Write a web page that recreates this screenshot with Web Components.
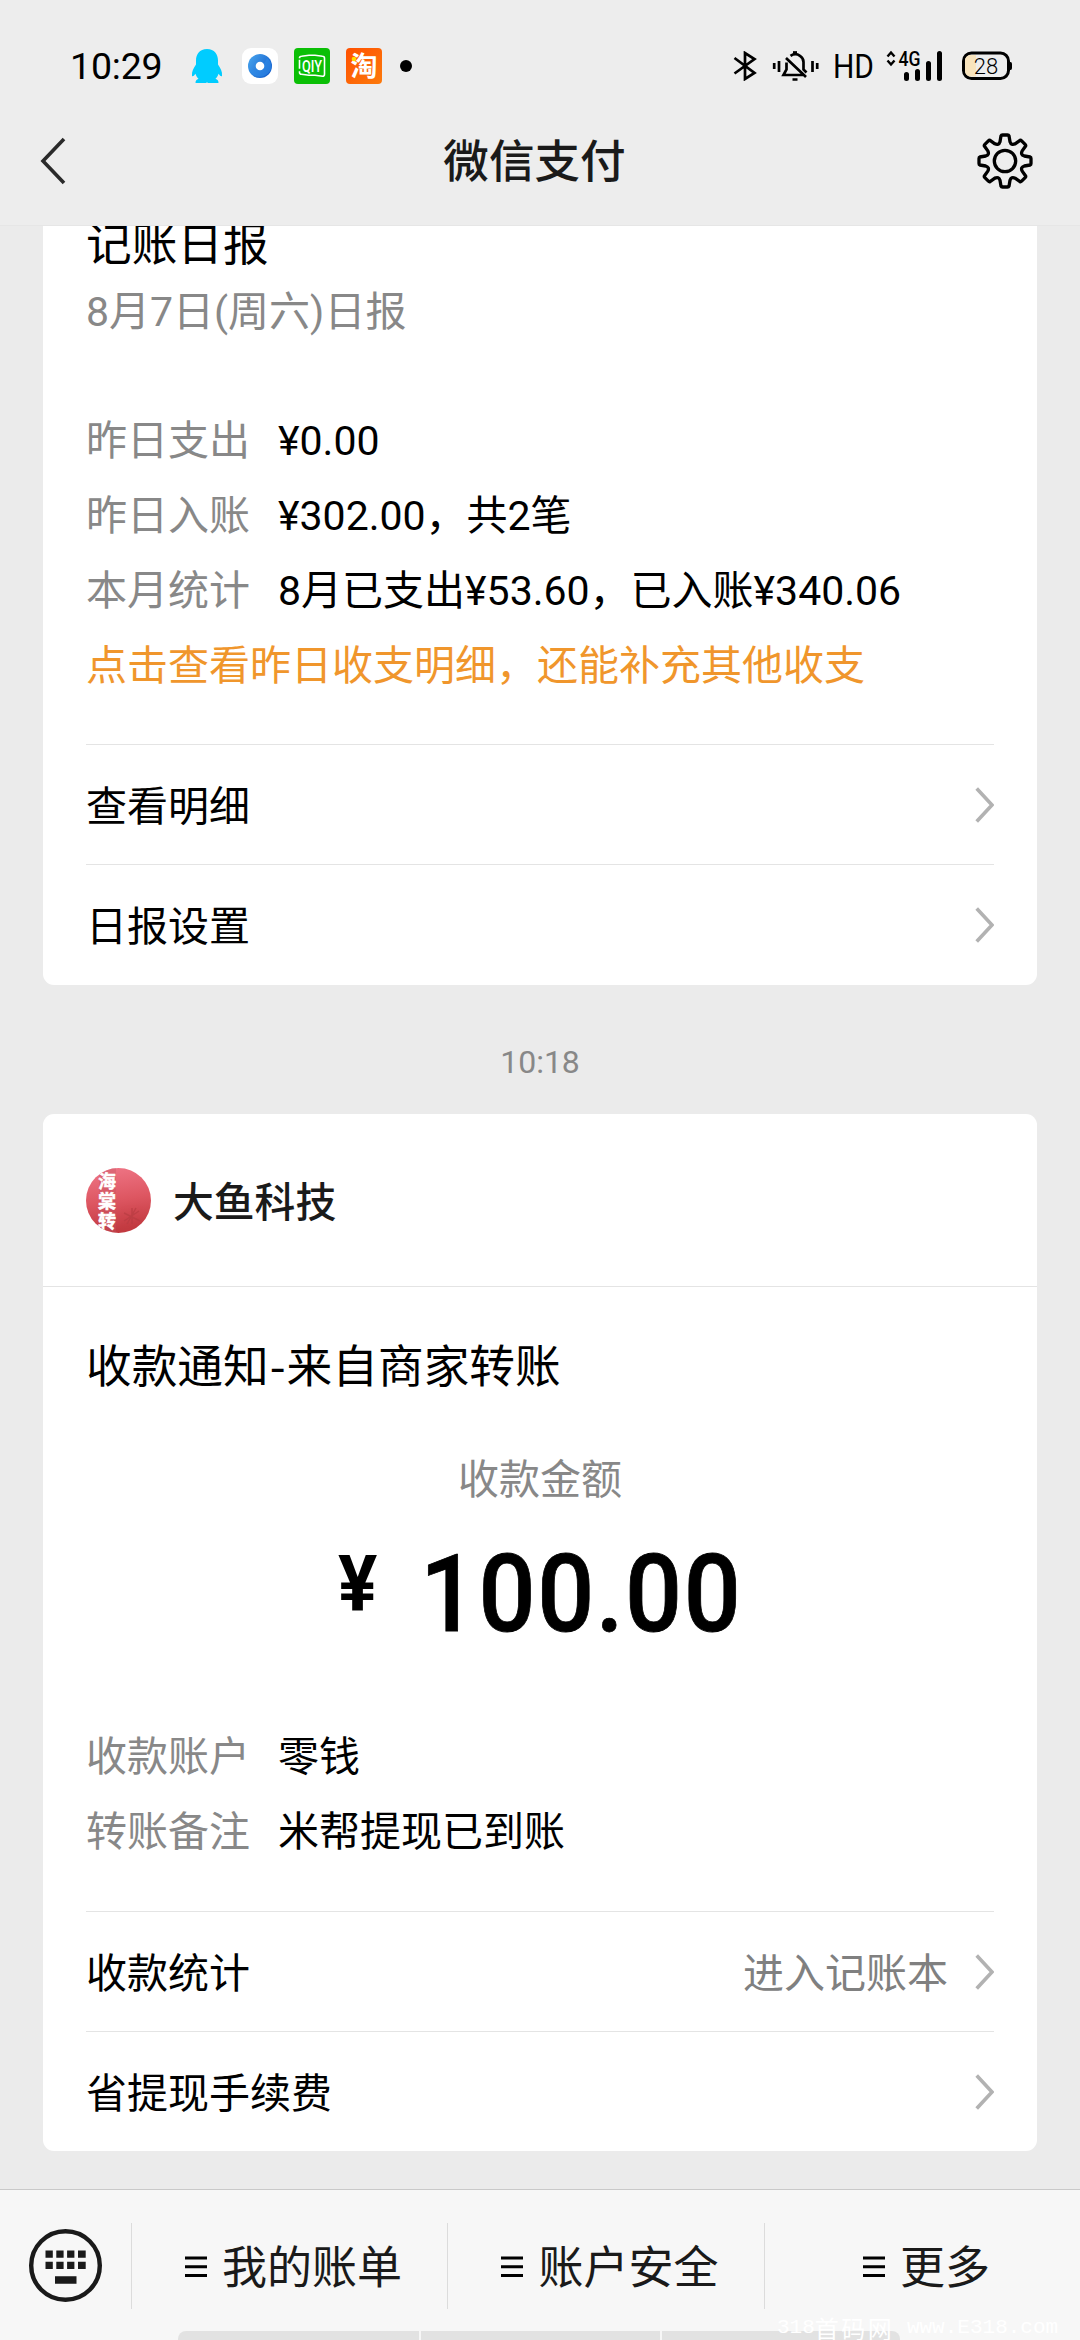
<!DOCTYPE html>
<html lang="zh-CN">
<head>
<meta charset="utf-8">
<title>微信支付</title>
<style>
html,body{margin:0;padding:0}
body{width:1080px;height:2340px;overflow:hidden;background:#ebebeb;font-family:Roboto,"Noto Sans CJK SC",sans-serif;color:#000}
</style>
</head>
<body>
<pay-screen></pay-screen>
<script>
const define = (name, html, setup) => customElements.define(name, class extends HTMLElement {
  constructor() {
    super();
    const root = this.attachShadow({mode: 'open'});
    const t = document.createElement('template');
    t.innerHTML = html;
    root.append(t.content.cloneNode(true));
    if (setup) setup(root, this);
  }
});

define('status-bar', `
<style>
:host{display:flex;height:96px;align-items:flex-start;box-sizing:border-box;padding:0 68px 0 70px;background:#ededed;justify-content:space-between}
.l,.r{display:flex;align-items:center;height:132px}
.time{font-size:37.5px;line-height:44px;width:95px;letter-spacing:-.2px;margin-right:25px;white-space:nowrap}
svg{display:block;flex:none}
</style>
<div class="l">
<span class="time">10:29</span>
<svg width="34" height="36" viewBox="0 0 34 36" style="margin-right:18px"><path fill="#0cf" d="M17 1C9.500 1 6 6.500 6 12.500v4C3.500 20 1.500 23.500 2 28c1 .8 2.500-.8 3.500-2.200.6 2 1.500 3.600 3 5C6.500 31.700 5.500 32.500 5.500 35h10.500c.8-.6 1.200-.6 2 0H28.500c0-2.500-1-3.300-3-4.200 1.500-1.400 2.400-3 3-5 1 1.400 2.500 3 3.500 2.200.5-4.500-1.500-8-4-11.500v-4C28 6.500 24.500 1 17 1Z"/></svg>
<svg width="36" height="36" viewBox="0 0 36 36" style="margin-right:16px"><defs><linearGradient id="g" x1="0" x2="1" y2=".6"><stop offset="0" stop-color="#4aa8f0"/><stop offset="1" stop-color="#1560cc"/></linearGradient></defs><rect width="36" height="36" rx="9" fill="#fff"/><circle cx="18" cy="18" r="12" fill="url(#g)"/><path d="M7 22c7 1 14-2 18-12 4 3 5 8 4 11-3 8-15 12-22 1Z" fill="#2f8ae8" opacity=".6"/><circle cx="18" cy="18" r="4.300" fill="#fff"/></svg>
<svg width="36" height="36" viewBox="0 0 36 36" style="margin-right:16px"><rect width="36" height="36" rx="4" fill="#0bbf06"/><path d="M5.500 10.500Q5.500 8.500 7.500 8.500L15 7.500h6l7.500 1q2 0 2 2v16q0 2-2 2l-7.500-1h-6l-7.500-1q-2 0-2-2v-1M5.500 12v9" transform="translate(0 -.2)" fill="none" stroke="#fff" stroke-width="1.600"/><text x="18" y="23.800" font-size="16.500" text-anchor="middle" fill="#fff" font-family="Roboto" font-weight="500" textLength="20" lengthAdjust="spacingAndGlyphs">QIY</text></svg>
<svg width="36" height="36" viewBox="0 0 36 36" style="margin-right:18px"><defs><linearGradient id="t" y2="1"><stop stop-color="#ff5000"/><stop offset="1" stop-color="#fc7a0c"/></linearGradient></defs><rect width="36" height="36" rx="4" fill="url(#t)"/><text x="18" y="28" font-size="27" text-anchor="middle" fill="#fff" font-family="Noto Sans CJK SC" font-weight="700">淘</text><circle cx="8" cy="11" r="2.300" fill="#fd0"/></svg>
<svg width="12" height="12"><circle cx="6" cy="6" r="6"/></svg>
</div>
<div class="r">
<svg width="24" height="30" viewBox="0 0 24 30" style="margin-right:15px" fill="none" stroke="#000" stroke-width="2.700"><path d="M1.500 7l20 15-9.500 6V2l9.500 6-20 14.500"/></svg>
<svg width="47" height="30" viewBox="0 0 47 30" style="margin-right:16px" fill="none" stroke="#000" stroke-width="2.700"><path d="M2.200 12v6M7 10v11M40.500 10v11M45.200 12v6M14.500 11.500v7L11.500 24h20M14 7l20 19M18.500 4.800Q23.500 1.500 28 4.800 31.500 7 31.500 11v7.500l3 3M20.500 28.500h5"/><path d="M21 1.500h4"/></svg>
<svg width="38" height="40" viewBox="0 0 38 40" style="margin-right:13px"><text x="-2" y="32" font-size="34" font-family="Roboto" textLength="41" lengthAdjust="spacingAndGlyphs">HD</text></svg>
<svg width="58" height="32" viewBox="0 0 58 32" style="margin-right:18px"><path d="M1.500 6.500L5 2.500l3.500 4M1.500 10.500l3.500 4 3.500-4" fill="none" stroke="#000" stroke-width="2.400"/><text x="12.500" y="16" font-size="19.500" font-family="Roboto" font-weight="500" textLength="22" lengthAdjust="spacingAndGlyphs">4G</text><g stroke="#000" stroke-width="5" stroke-linecap="round"><path d="M20.500 24.500v4M31.500 21.500v7M42.500 13.500v15M53.500 3.500v25"/></g></svg>
<svg width="50" height="30" viewBox="0 0 50 30"><rect x="1.500" y="2" width="45" height="25.500" rx="8" fill="#ededed" stroke="#000" stroke-width="3"/><path d="M8 4h6v21.500H8q-5-1-5-6v-10Q3 5 8 4Z" fill="#f8e4bd"/><path d="M47.500 11h1q1.500 0 1.500 2v4q0 2-1.500 2h-1Z"/><text x="24" y="22.700" font-size="22" text-anchor="middle" font-family="Roboto" font-weight="300">28</text></svg>
</div>`);

define('nav-bar', `
<style>
:host{display:flex;height:130px;box-sizing:border-box;border-bottom:1px solid #e6e6e6;background:#ededed;align-items:center;padding:1px 46px 0 40px;justify-content:space-between}
h1{margin:3px 0 0 27px;font-size:45.600px;line-height:60px;font-weight:500;color:#1a1a1a}
svg{display:block}
</style>
<svg width="26" height="48" viewBox="0 0 26 48"><path d="M24 2L3 24l21 22" fill="none" stroke="#2a2a2a" stroke-width="3.600"/></svg>
<h1><slot></slot></h1>
<svg width="58" height="58" viewBox="-29 -29 58 58" fill="none" stroke="#000" stroke-width="3.300" stroke-linejoin="round"><path id="gear"/><circle r="10.700"/></svg>`,
root => {
  let d = '';
  for (let i = 0; i < 8; i++) {
    const a = i * Math.PI / 4;
    const p = (x, y) => (x * Math.cos(a) - y * Math.sin(a)).toFixed(2) + ' ' + (x * Math.sin(a) + y * Math.cos(a)).toFixed(2);
    const n = (r, t) => p(r * Math.cos(t), r * Math.sin(t));
    d += (i ? 'L' : 'M') + p(19.300, -5) + 'L' + p(25.200, -4) + 'Q' + p(26, -3.700) + ' ' + p(26, -2.500) + 'L' + p(26, 2.500) + 'Q' + p(26, 3.700) + ' ' + p(25.200, 4) + 'L' + p(19.300, 5) + 'Q' + n(16.500, Math.PI / 8) + ' ' + n(19.940, Math.PI / 4 - .2535);
  }
  root.getElementById('gear').setAttribute('d', d + 'Z');
});

define('pay-card', `
<style>
:host{display:block;background:#fff;border-radius:11px;overflow:hidden}
</style><slot></slot>`);

define('detail-row', `
<style>
:host{display:flex;height:75px;line-height:75px;font-size:41px;padding:0 43px;white-space:nowrap}
.k{color:#888;width:192px;flex:none}
</style><span class="k"><slot name="label"></slot></span><span><slot></slot></span>`);

define('link-row', `
<style>
:host{display:flex;height:120px;box-sizing:border-box;border-top:1px solid #e4e4e4;margin:0 43px;align-items:center;font-size:41px;line-height:60px}
.t{flex:1;padding-top:5px}
.n{color:#808080;margin-right:26px;padding-top:4px}
svg{display:block}
</style><span class="t"><slot></slot></span><span class="n"><slot name="note"></slot></span>
<svg width="20" height="36" viewBox="0 0 20 36"><path d="M2.700 1.500L18 18 2.700 34.500" fill="none" stroke="#b2b2b2" stroke-width="3.600"/></svg>`);

define('merchant-head', `
<style>
:host{display:flex;align-items:center;padding:0 43px;border-bottom:1px solid #e4e4e4;box-sizing:border-box;height:173px}
svg{display:block;margin-right:22px}
b{font-weight:500;font-size:40.800px;line-height:60px;color:#1a1a1a;padding-top:5px}
</style>
<svg width="65" height="65" viewBox="0 0 65 65"><defs><linearGradient id="a" x2=".15" y2="1"><stop stop-color="#f07788"/><stop offset=".55" stop-color="#dd5661"/><stop offset="1" stop-color="#c23a40"/></linearGradient><clipPath id="c"><circle cx="32.500" cy="32.500" r="32.500"/></clipPath></defs>
<g clip-path="url(#c)"><rect width="65" height="65" fill="url(#a)"/><rect x="13" width="17" height="65" fill="#c35462" opacity=".35"/><path d="M46 40v16M38 45l16 8M38 53l15-10M41 56l9-16" stroke="#b83c42" stroke-width="1.500" opacity=".7"/>
<g fill="#fff" stroke="#fff" stroke-width=".5" font-family="Noto Sans CJK SC" font-weight="700" font-size="18" text-anchor="middle"><text x="21" y="20">海</text><text x="21" y="40">棠</text><text x="21" y="60">转</text></g></g></svg>
<b><slot></slot></b>`);

define('amount-view', `
<style>
:host{display:flex;flex-direction:column;align-items:center}
.c{font-size:41px;line-height:60px;color:#888;margin:-1px 0 29px}
.a{display:flex;justify-content:space-between;width:405px;height:110px;line-height:110px;font-size:108px;font-weight:500;white-space:nowrap}
.y{font-size:78px;font-weight:700;line-height:91px;width:39px;transform:scaleX(.94);transform-origin:0 50%}
.v{width:323px;letter-spacing:1.600px;transform:scaleX(.93);transform-origin:0 50%;-webkit-text-stroke:.8px #000}
</style><div class="c"><slot name="caption"></slot></div><div class="a"><span class="y">¥</span><span class="v"><slot></slot></span></div>`);

define('menu-item', `
<style>
:host{display:flex;align-items:center;justify-content:center;flex:none;height:86px;border-left:1px solid #dcdcdc;box-sizing:border-box;padding-left:9px;color:#1a1a1a;font-size:45px;line-height:60px}
svg{display:block;margin:2px 15px 0 0}
span{padding-top:6px}
</style><svg width="22" height="22" viewBox="0 0 22 22"><path d="M0 2h22M0 10.800h22M0 19.600h22" stroke="#000" stroke-width="3"/></svg><span><slot></slot></span>`);

define('menu-bar', `
<style>
:host{display:block;position:relative;height:151px;box-sizing:border-box;border-top:1px solid #c9c9c9;background:#f7f7f7;overflow:hidden}
.r{display:flex;align-items:center;height:151px}
.kb{margin:0 27.500px 0 28px;flex:none;display:block}
.grip{position:absolute;left:178px;top:141px;width:722px;height:16px;border-radius:8px;overflow:hidden;display:flex;gap:2px}
.grip i{flex:1;background:#e2e2e2}
.grip i:first-child{flex:0 0 241px}
.wm{position:absolute;left:777px;top:126px;white-space:pre;color:#fff;font:21px/24px "Liberation Mono","Noto Sans CJK SC",monospace;display:flex}
.wm em{font-style:normal;font-size:24px;letter-spacing:2.500px;font-family:"Noto Sans CJK SC",sans-serif}
</style>
<div class="r"><svg class="kb" width="75" height="75" viewBox="0 0 75 75"><circle cx="37.500" cy="37.500" r="34.300" fill="none" stroke="#1a1a1a" stroke-width="4.400"/><path fill="#1a1a1a" d="M17.500 22.500h7.300v7.300h-7.300ZM28.300 22.500h7.300v7.300h-7.300ZM39.100 22.500h7.300v7.300h-7.300ZM50 22.500h7.700v7.300H50ZM17.500 33.700h7.300V41h-7.300ZM28.300 33.700h7.300V41h-7.300ZM39.100 33.700h7.300V41h-7.300ZM50 33.700h7.700V41H50ZM27 48.200h21.500v7.600H27Z"/></svg>
<slot></slot></div>
<div class="grip"><i></i><i></i><i></i></div>
<div class="wm"><span>318</span><em>首码网</em><span> www.E318.com</span></div>`);

define('pay-screen', `
<style>
:host{display:flex;flex-direction:column;height:2340px}
main{height:1963px;box-sizing:border-box;padding:0 43px;overflow:hidden}
pay-card.first{height:759px;border-radius:0 0 11px 11px}
.t{font-size:45.700px;line-height:64px;padding:0 43px}
.t i{font-style:normal;line-height:0;padding:0 1px;font-family:"Noto Sans CJK SC",sans-serif}
.first .t{margin-top:-12px}
.s{font-size:41px;line-height:60px;padding:4px 43px 62px;color:#888}
.o{font-size:41px;line-height:75px;padding:0 43px 40px;color:#f0962c}
.time{height:129px;box-sizing:border-box;padding-top:52px;text-align:center;font-size:32px;line-height:50px;color:#888}
.second .t{padding-top:49px;padding-bottom:51px;height:64px}
.sp{height:71px}
.sq{height:41px}
</style>
<status-bar></status-bar>
<nav-bar>微信支付</nav-bar>
<main>
<pay-card class="first">
<div class="t">记账日报</div>
<div class="s">8月7日(周六)日报</div>
<detail-row><span slot="label">昨日支出</span>¥0.00</detail-row>
<detail-row><span slot="label">昨日入账</span>¥302.00，共2笔</detail-row>
<detail-row><span slot="label">本月统计</span>8月已支出¥53.60，已入账¥340.06</detail-row>
<div class="o">点击查看昨日收支明细，还能补充其他收支</div>
<link-row>查看明细</link-row>
<link-row>日报设置</link-row>
</pay-card>
<div class="time">10:18</div>
<pay-card class="second">
<merchant-head>大鱼科技</merchant-head>
<div class="t">收款通知<i>-</i>来自商家转账</div>
<amount-view><span slot="caption">收款金额</span>100.00</amount-view>
<div class="sp"></div>
<detail-row><span slot="label">收款账户</span>零钱</detail-row>
<detail-row><span slot="label">转账备注</span>米帮提现已到账</detail-row>
<div class="sq"></div>
<link-row>收款统计<span slot="note">进入记账本</span></link-row>
<link-row>省提现手续费</link-row>
</pay-card>
</main>
<menu-bar>
<menu-item style="width:316px">我的账单</menu-item>
<menu-item style="width:317px">账户安全</menu-item>
<menu-item style="width:316px">更多</menu-item>
</menu-bar>`);
</script>
</body>
</html>
